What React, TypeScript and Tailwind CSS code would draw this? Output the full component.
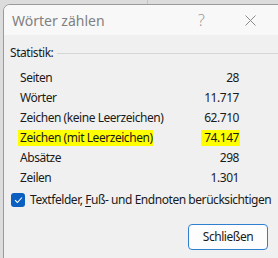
const rows = [
  { label: "Seiten", value: "28" },
  { label: "Wörter", value: "11.717" },
  { label: "Zeichen (keine Leerzeichen)", value: "62.710" },
  { label: "Zeichen (mit Leerzeichen)", value: "74.147", marked: true },
  { label: "Absätze", value: "298" },
  { label: "Zeilen", value: "1.301" },
];

export default function App() {
  return (
    <div className="w-[278px] h-[258px] overflow-hidden bg-[#dcdcdc] font-['Noto_Sans',sans-serif] text-[12px] tracking-[-0.45px] text-[#1a1a1a]">
      <div className="h-[4px] flex">
        <div className="w-[148px] border-r border-[#c4c4c4]" />
      </div>
      <div className="ml-[3px] w-[285px] h-[260px] rounded-tl-[7px] border border-[#9a9a9a] bg-[#f0f0f0] overflow-hidden">
        <div className="h-[30px] bg-[#f8f8f8] flex items-center pl-[8px]">
          <span className="w-[186px] text-[14px] tracking-normal text-[#808080]">Wörter zählen</span>
          <span className="w-[47px] text-[16px] text-[#9a9a9a] font-light">?</span>
          <svg width="11" height="11" viewBox="0 0 11 11">
            <path d="M0.5 0.5 L10.5 10.5 M10.5 0.5 L0.5 10.5" stroke="#8a8a8a" strokeWidth="1" />
          </svg>
        </div>
        <div className="pl-[6px] pr-[8px] pt-[9px]">
          <div className="flex items-center gap-[4px]">
            <span>Statistik:</span>
            <div className="flex-1 h-px bg-[#d6d6d6]" />
          </div>
          <div className="mt-[6px] pl-[10px] w-[229px]">
            {rows.map((r) => (
              <div key={r.label} className="h-[20px] flex items-center justify-between">
                <span className={r.marked ? "bg-[#ffff00] pl-[2px] -ml-[2px] leading-[16px]" : ""}>{r.label}</span>
                <span className={r.marked ? "bg-[#ffff00] pl-[3px] -mr-[1px] pr-[1px] leading-[16px]" : ""}>{r.value}</span>
              </div>
            ))}
          </div>
          <div className="mt-[3px] flex items-center gap-[5px] pl-[1px] whitespace-nowrap">
            <div className="w-[14px] h-[14px] rounded-[3px] bg-[#0a5fc0] flex items-center justify-center shrink-0">
              <svg width="9" height="8" viewBox="0 0 9 8">
                <path d="M1 4.2 L3.4 6.5 L8 1.5" fill="none" stroke="white" strokeWidth="1.1" />
              </svg>
            </div>
            <span>
              Textfelder, <span className="underline underline-offset-2">F</span>uß- und Endnoten berücksichtigen
            </span>
          </div>
          <div className="mt-[15px] flex">
            <button className="ml-[178px] w-[80px] h-[26px] rounded-[4px] border border-[#2f7fd0] bg-[#fdfdfd] text-[12px]">
              Schließen
            </button>
          </div>
        </div>
      </div>
    </div>
  );
}
